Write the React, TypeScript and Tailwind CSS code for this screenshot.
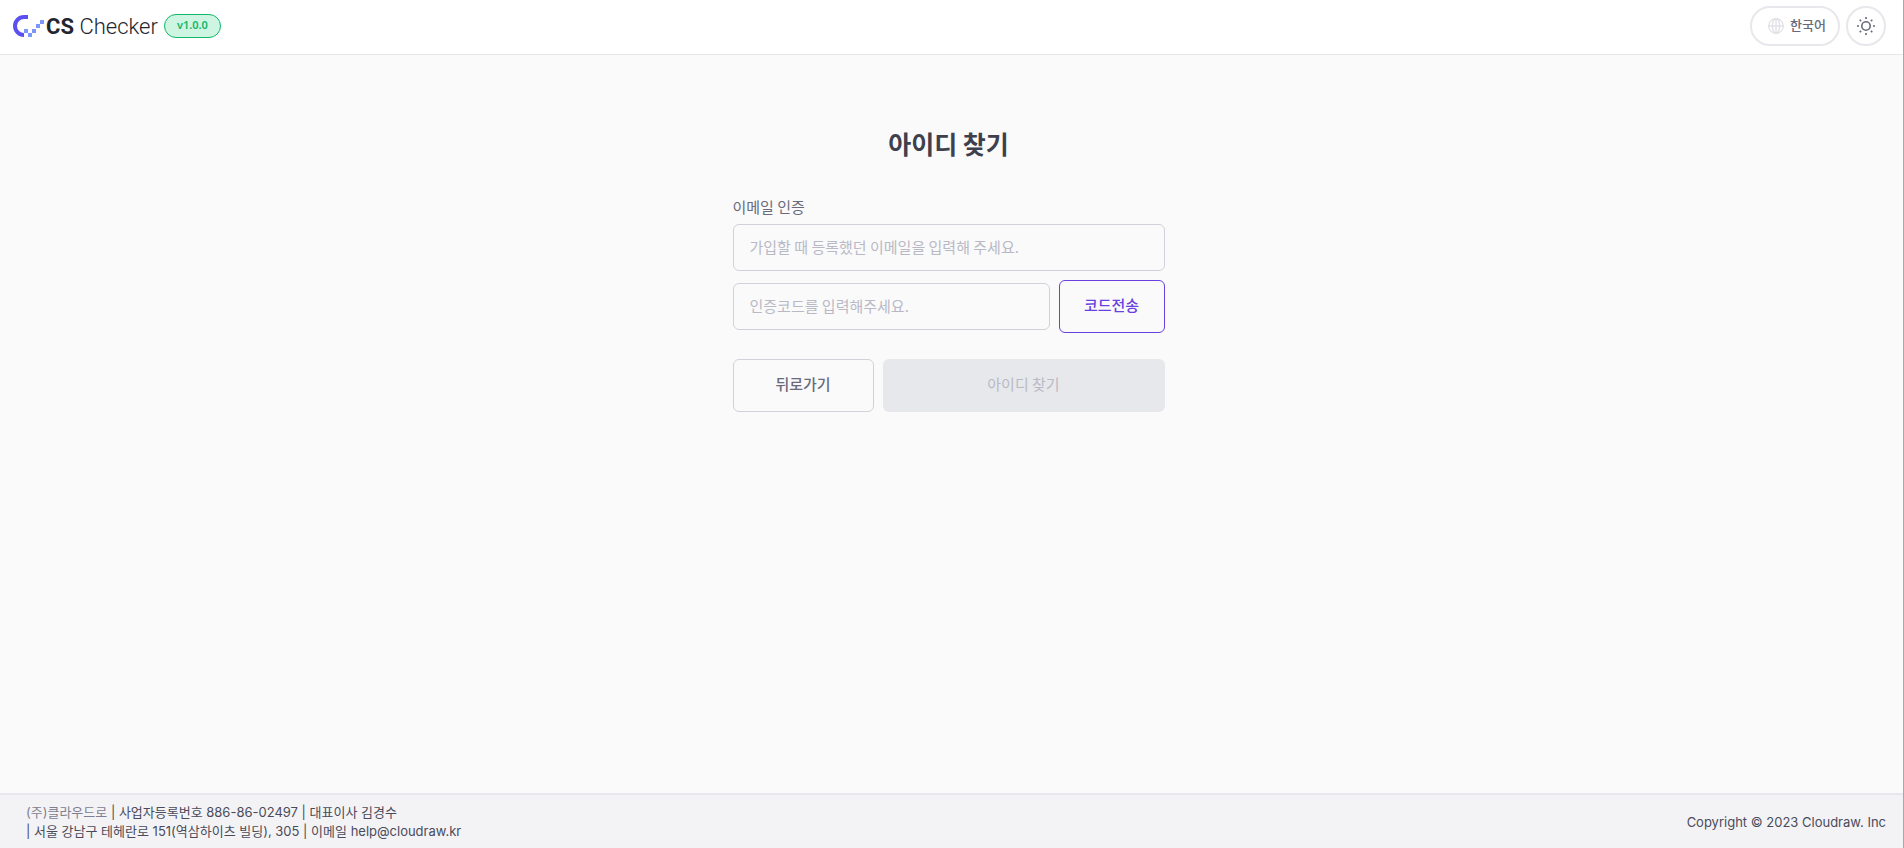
function Logo() {
  return (
    <a href="#" className="flex items-center text-[#24262f]" aria-label="CS Checker">
      <svg width="31" height="22" viewBox="0 0 31 22" aria-hidden="true">
        <path d="M15 0v4h-4a7 7 0 0 0 0 14v4A11 11 0 0 1 11 0Z" fill="#5b4ff0" />
        <g fill="#7b97fb">
          <rect x="11" y="14" width="4" height="4" />
          <rect x="15" y="18" width="4" height="4" />
          <rect x="19" y="14" width="4" height="4" />
          <rect x="23" y="9" width="4" height="4" />
          <rect x="27" y="5" width="4" height="4" />
        </g>
      </svg>
      <span className="ml-[2px] pt-[2px] font-['Roboto',sans-serif] text-[22px] leading-6">
        <b className="font-bold">CS</b> <span className="font-light">Checker</span>
      </span>
    </a>
  );
}

function Header() {
  return (
    <header className="flex h-[55px] items-center justify-between border-b border-[#e7e7ea] bg-white pl-[13px] pr-[17px] pb-[3px]">
      <div className="flex items-center gap-[6px]">
        <Logo />
        <span className="flex h-6 items-center rounded-full border border-[#12b76a] bg-[#cdf5e1] px-3 font-['Noto_Sans',sans-serif] text-[11px] font-semibold text-[#12b76a]">
          v1.0.0
        </span>
      </div>
      <div className="flex items-center gap-[6px]">
        <button className="flex h-10 items-center gap-[6px] rounded-full border-2 border-[#e7e7ec] pl-4 pr-3 text-[13px] font-medium text-[#696a7b]">
          <svg width="16" height="16" viewBox="0 0 16 16" fill="none" stroke="#e1e1e6" strokeWidth="1.3" aria-hidden="true">
            <circle cx="8" cy="8" r="7.3" />
            <ellipse cx="8" cy="8" rx="3.6" ry="7.3" />
            <path d="M8 .7v14.6M.7 8h14.6" />
          </svg>
          한국어
        </button>
        <button className="flex size-10 items-center justify-center rounded-full border-2 border-[#e7e7ec] text-[#696a7b]" aria-label="테마">
          <svg width="18" height="18" viewBox="0 0 18 18" fill="none" stroke="currentColor" strokeWidth="1.6" aria-hidden="true">
            <circle cx="9" cy="9" r="4.2" />
            <path d="M9 0v2M9 16v2M0 9h2M16 9h2M2.7 2.7l1.4 1.4M13.9 13.9l1.4 1.4M2.7 15.3l1.4-1.4M13.9 4.1l1.4-1.4" />
          </svg>
        </button>
      </div>
    </header>
  );
}

function FindIdForm() {
  const inputStyle =
    "h-[47px] w-full min-w-0 rounded-md border border-[#d1d1db] bg-transparent px-4 pb-[2px] text-[15px] text-[#3f404d] placeholder:text-[#b9b9c6]";

  return (
    <form className="w-full max-w-[432px] font-['Noto_Sans_CJK_KR',sans-serif]" onSubmit={(e) => e.preventDefault()}>
      <h1 className="text-center text-[25px] leading-9 font-bold text-[#3f404d]">아이디 찾기</h1>
      <label htmlFor="email" className="mt-9 mb-[7px] block text-[15px] leading-5 text-[#696a7b]">
        이메일 인증
      </label>
      <input id="email" type="email" placeholder="가입할 때 등록했던 이메일을 입력해 주세요." className={inputStyle} />
      <div className="mt-[9px] flex items-center gap-[9px]">
        <input type="text" aria-label="인증코드" placeholder="인증코드를 입력해주세요." className={inputStyle} />
        <button type="button" className="h-[53px] w-[106px] shrink-0 rounded-md border border-[#6941e0] pb-[2px] text-[15px] font-medium text-[#6941e0]">
          코드전송
        </button>
      </div>
      <div className="mt-[26px] flex gap-[9px]">
        <button type="button" className="h-[53px] w-[141px] shrink-0 rounded-md border border-[#d1d1db] pb-[2px] text-[15px] font-medium text-[#696a7b]">
          뒤로가기
        </button>
        <button type="submit" disabled className="h-[53px] flex-1 rounded-md bg-[#e7e8ec] pb-[2px] text-[15px] text-[#b9b9c6]">
          아이디 찾기
        </button>
      </div>
    </form>
  );
}

function Footer() {
  return (
    <footer className="flex items-center justify-between border-t-2 border-[#e7e7ec] bg-[#f3f3f6] pt-2 pb-[7px] pl-[26px] pr-[17px] text-[13px] leading-[19px] text-[#4a4b5a]">
      <div>
        <p>
          <span className="text-[#7f808f]">(주)클라우드로</span> | 사업자등록번호 886-86-02497 | 대표이사 김경수
        </p>
        <p>| 서울 강남구 테헤란로 151(역삼하이츠 빌딩), 305 | 이메일 help@cloudraw.kr</p>
      </div>
      <p>Copyright © 2023 Cloudraw. Inc</p>
    </footer>
  );
}

export default function App() {
  return (
    <div className="flex min-h-screen flex-col border-r border-[#a8a8a8] bg-[#fafafa] font-['Inter','Noto_Sans_CJK_KR',sans-serif]">
      <Header />
      <main className="flex flex-1 justify-center pt-[70px] pr-[6px]">
        <FindIdForm />
      </main>
      <Footer />
    </div>
  );
}
